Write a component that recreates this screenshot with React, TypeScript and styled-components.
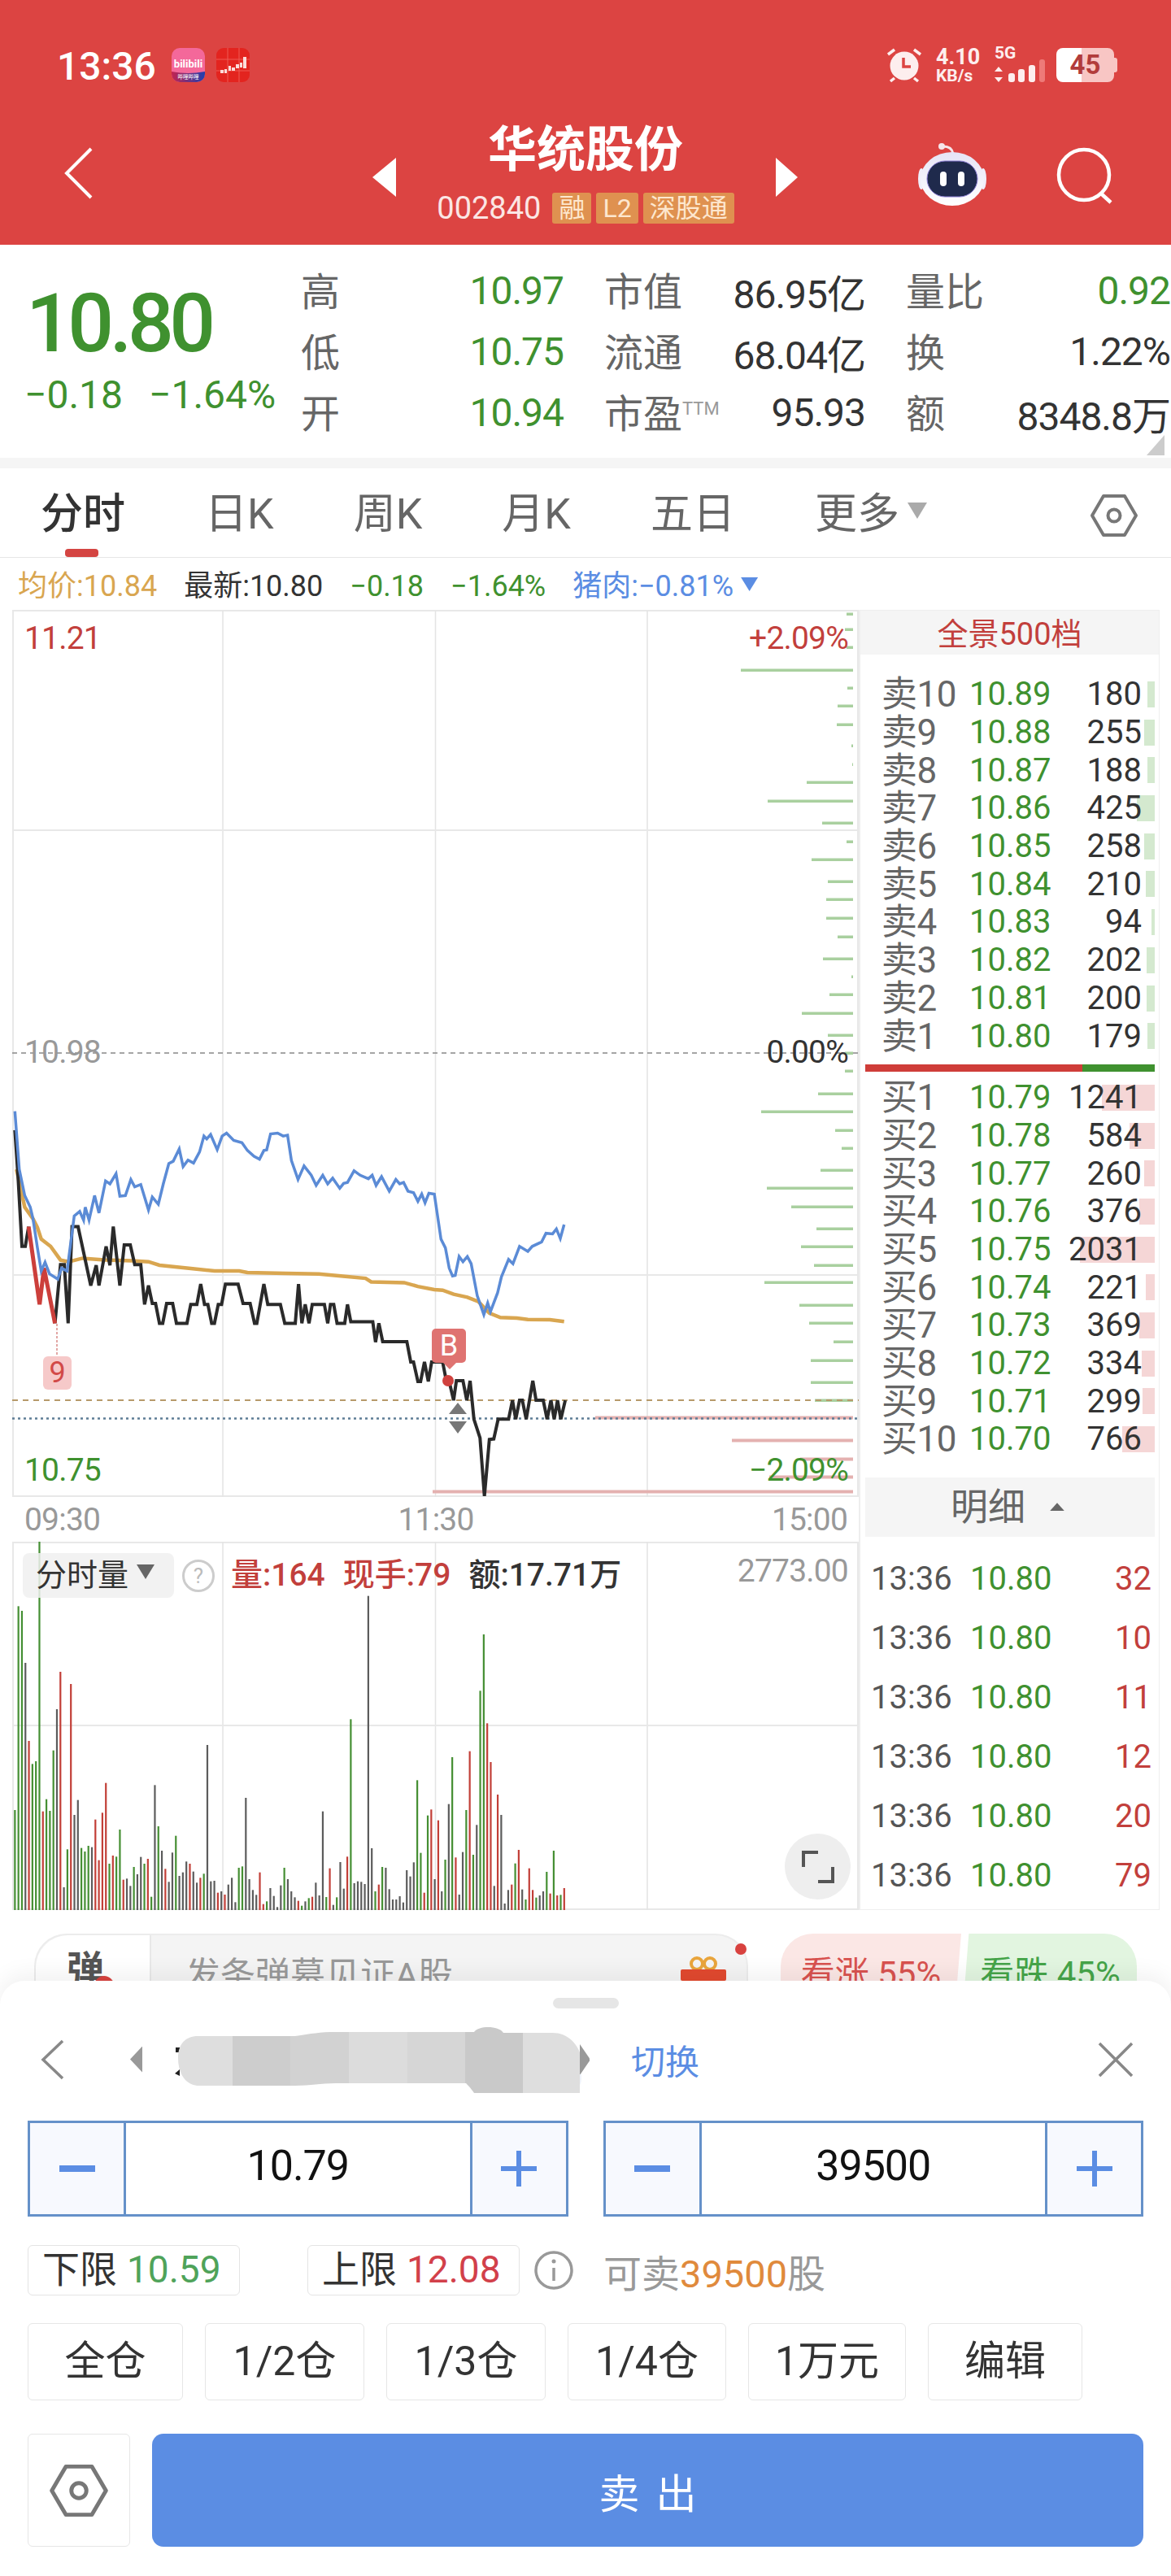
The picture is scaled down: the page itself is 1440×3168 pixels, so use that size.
import React from 'react';
import styled, { createGlobalStyle } from 'styled-components';

const RED = '#c23f3c';
const GREEN = '#3f912f';
const BLUE = '#5b8de3';
const GOLD = '#d9a650';
const INK = '#333';
const GRAY = '#666';
const GRID = '#e8e8e8';

const GlobalStyle = createGlobalStyle`
    html, body { margin: 0; padding: 0; background: #fff; }
    body { font-family: Roboto, "Noto Sans CJK SC", sans-serif; }
    * { box-sizing: border-box; }
`;

const Page = styled.div`
    position: relative;
    width: 1440px;
    height: 3168px;
    overflow: hidden;
    background: #fff;
    color: ${INK};
`;

/* Header */
const Header = styled.header`
    height: 301px;
    background: #dc4442;
    color: #fff;
`;

const StatusBar = styled.div`
    height: 150px;
    padding: 58px 70px 0 70px;
    display: flex;
    align-items: flex-start;
`;

const Clock = styled.span`
    font-size: 48px;
    font-weight: 500;
    line-height: 48px;
    width: 141px;
`;

const StatusRight = styled.div`
    margin-left: auto;
    display: flex;
    align-items: center;
    height: 44px;
    color: #fdeeee;
`;

const NetSpeed = styled.div`
    width: 72px;
    margin-left: 17px;
`;

const SpeedValue = styled.div`
    font-size: 27px;
    font-weight: 700;
    line-height: 26px;
`;

const SpeedUnit = styled.div`
    font-size: 21px;
    font-weight: 700;
    line-height: 20px;
`;

const NetType = styled.span`
    font-size: 21px;
    font-weight: 700;
    line-height: 20px;
    display: block;
    margin-bottom: -3px;
`;

const Battery = styled.div`
    position: relative;
    width: 71px;
    height: 42px;
    margin-left: 12px;
    border-radius: 8px;
    background: linear-gradient(90deg, #fff 44%, #f8c6c4 44%);
    color: #b23c3b;
    font-size: 33px;
    font-weight: 700;
    line-height: 42px;
    text-align: center;

    &::after {
        content: '';
        position: absolute;
        right: -4px;
        top: 12px;
        width: 4px;
        height: 18px;
        border-radius: 0 3px 3px 0;
        background: #f8c6c4;
    }
`;

const NavBar = styled.div`
    position: relative;
    height: 151px;
    display: flex;
    justify-content: center;
`;

const NavIcon = styled.svg<{ $left: number; $top: number }>`
    position: absolute;
    left: ${({ $left }) => $left}px;
    top: ${({ $top }) => $top}px;
`;

const TitleBlock = styled.div`
    text-align: center;
`;

const Title = styled.div`
    font-size: 60px;
    font-weight: 700;
    line-height: 70px;
`;

const SubRow = styled.div`
    margin-top: 17px;
    display: flex;
    align-items: center;
    justify-content: center;
    gap: 6px;
    font-size: 38px;
    line-height: 38px;
    color: #fbe6e4;
`;

const Code = styled.span`
    margin-right: 8px;
`;

const Tag = styled.span`
    background: #df9150;
    color: #fde7cf;
    border-radius: 3px;
    font-size: 32px;
    line-height: 38px;
    padding: 0 8px;
`;

/* Quote summary */
const Quote = styled.section`
    position: relative;
    height: 275px;
    padding: 19px 0 0 30px;
    display: flex;
    border-bottom: 13px solid #f5f5f5;
`;

const PriceBlock = styled.div`
    width: 340px;
    color: ${GREEN};
`;

const BigPrice = styled.div`
    margin: 22px 0 0 2px;
    font-size: 100px;
    font-weight: 500;
    line-height: 112px;
    letter-spacing: -5.5px;
`;

const PriceDelta = styled.div`
    display: flex;
    gap: 32px;
    margin-top: 6px;
    font-size: 48px;
    line-height: 52px;
    white-space: nowrap;
`;

const StatGrid = styled.div`
    display: grid;
    grid-template-columns: 323px 321px 325px;
    grid-auto-rows: 75px;
    column-gap: 50px;
`;

const Stat = styled.div`
    display: flex;
    justify-content: space-between;
    align-items: center;
    white-space: nowrap;
`;

const StatLabel = styled.span`
    margin-top: -5px;
    font-size: 48px;
    color: ${GRAY};
`;

const Ttm = styled.sup`
    font-size: 22px;
    color: #999;
    vertical-align: 16px;
    line-height: 0;
`;

const StatValue = styled.span<{ $green?: boolean }>`
    font-size: 48px;
    letter-spacing: -1px;
    color: ${({ $green }) => ($green ? GREEN : INK)};
`;

const CornerMark = styled.div`
    position: absolute;
    right: 8px;
    bottom: 3px;
    width: 22px;
    height: 25px;
    background: #ccc;
    clip-path: polygon(100% 0, 100% 100%, 0 100%);
`;

/* Tabs */
const Tabs = styled.nav`
    position: relative;
    height: 110px;
    padding: 27px 0 0 50px;
    display: flex;
    gap: 98px;
    border-bottom: 1px solid #e6e6e6;
`;

const Tab = styled.span<{ $active?: boolean }>`
    position: relative;
    font-size: 52px;
    line-height: 60px;
    color: ${({ $active }) => ($active ? INK : GRAY)};
    font-weight: ${({ $active }) => ($active ? 500 : 400)};
    white-space: nowrap;
`;

const TabMark = styled.span`
    position: absolute;
    left: 30px;
    top: 72px;
    width: 41px;
    height: 10px;
    border-radius: 4px;
    background: #d44542;
`;

const TabCaret = styled.span`
    display: inline-block;
    margin-left: 10px;
    width: 24px;
    height: 20px;
    vertical-align: 12px;
    background: #aaa;
    clip-path: polygon(0 0, 100% 0, 50% 100%);
`;

const TabSettings = styled.div`
    position: absolute;
    left: 1340px;
    top: 28px;
`;

/* Legend */
const Legend = styled.div`
    height: 64px;
    padding: 13px 0 0 22px;
    display: flex;
    align-items: flex-start;
    gap: 33px;
    font-size: 36px;
    line-height: 44px;
    white-space: nowrap;
`;

const LegendItem = styled.span<{ $color: string }>`
    color: ${({ $color }) => $color};
`;

const LegendCaret = styled.span`
    display: inline-block;
    margin-left: 9px;
    width: 21px;
    height: 17px;
    vertical-align: 6px;
    background: ${BLUE};
    clip-path: polygon(0 0, 100% 0, 50% 100%);
`;

/* Market area */
const Market = styled.div`
    display: flex;
    padding-left: 15px;
    height: 1599px;
`;

const ChartColumn = styled.div`
    width: 1041px;
`;

const PriceChart = styled.div`
    position: relative;
    width: 1041px;
    height: 1091px;
`;

const ChartSvg = styled.svg`
    display: block;
`;

const ChartLabel = styled.span<{ $color: string; $top: number; $left?: number; $right?: number }>`
    position: absolute;
    top: ${({ $top }) => $top}px;
    ${({ $left }) => ($left !== undefined ? `left: ${$left}px;` : '')}
    ${({ $right }) => ($right !== undefined ? `right: ${$right}px;` : '')}
    color: ${({ $color }) => $color};
    font-size: 39px;
    letter-spacing: -.8px;
    line-height: 44px;
`;

const TradeMark = styled.span`
    position: absolute;
    left: 516px;
    top: 884px;
    width: 42px;
    height: 42px;
    border-radius: 5px;
    background: #df7371;
    color: #fff;
    font-size: 36px;
    line-height: 42px;
    text-align: center;
`;

const CountMark = styled.span`
    position: absolute;
    left: 38px;
    top: 918px;
    width: 35px;
    height: 41px;
    border-radius: 6px;
    background: #f6c9c9;
    color: #d24a48;
    font-size: 36px;
    line-height: 41px;
    text-align: center;
`;

const TimeAxis = styled.div`
    height: 55px;
    padding: 6px 14px 0 15px;
    display: flex;
    justify-content: space-between;
    color: #999;
    font-size: 39px;
    letter-spacing: -.8px;
    line-height: 44px;
`;

const VolumeChart = styled.div`
    position: relative;
    height: 453px;
`;

const VolumeHead = styled.div`
    position: absolute;
    left: 13px;
    top: 14px;
    display: flex;
    align-items: center;
    font-size: 39px;
    line-height: 55px;
    white-space: nowrap;
`;

const VolumeChip = styled.span`
    width: 186px;
    height: 55px;
    padding-left: 16px;
    background: rgba(240, 240, 240, .85);
    border-radius: 8px;
    font-size: 38px;
`;

const VolumeCaret = styled.span`
    display: inline-block;
    margin-left: 10px;
    width: 22px;
    height: 18px;
    vertical-align: 8px;
    background: #666;
    clip-path: polygon(0 0, 100% 0, 50% 100%);
`;

const HelpMark = styled.span`
    width: 40px;
    height: 40px;
    margin: 0 20px 0 10px;
    border: 3px solid #ccc;
    border-radius: 50%;
    color: #bbb;
    font-size: 26px;
    line-height: 34px;
    text-align: center;
`;

const VolumeStat = styled.span<{ $color: string }>`
    margin-right: 22px;
    color: ${({ $color }) => $color};
    font-weight: 500;
`;

const ExpandButton = styled.div`
    position: absolute;
    left: 950px;
    top: 359px;
    width: 81px;
    height: 81px;
    border-radius: 50%;
    background: #eee;
    display: flex;
    align-items: center;
    justify-content: center;
`;

/* Order book */
const Book = styled.aside`
    width: 370px;
    height: 1599px;
    border: solid #eee;
    border-width: 1px 1px 1px 2px;
    overflow: hidden;
`;

const BookHead = styled.div`
    height: 54px;
    background: #f5f5f5;
    color: ${RED};
    font-size: 38px;
    line-height: 58px;
    text-align: center;
`;

const BookRows = styled.div<{ $top: number }>`
    padding-top: ${({ $top }) => $top}px;
`;

const BookRow = styled.div`
    position: relative;
    height: 46.7px;
    padding: 0 21px 0 26px;
    display: flex;
    align-items: center;
    font-size: 40px;
    line-height: 46px;
    white-space: nowrap;
`;

const BookLabel = styled.span`
    width: 108px;
    font-size: 44px;
    letter-spacing: -.5px;
    color: ${GRAY};
`;

const BookPrice = styled.span`
    color: ${GREEN};
`;

const BookQty = styled.span`
    position: relative;
    margin-left: auto;
    color: ${INK};
`;

const BookBar = styled.span<{ $color: string; $w: number }>`
    position: absolute;
    right: 5px;
    top: 7px;
    height: 32px;
    width: ${({ $w }) => $w}px;
    background: ${({ $color }) => $color};
`;

const SplitBar = styled.div`
    height: 9px;
    margin: 11px 5px 9px 6px;
    background: linear-gradient(90deg, #cf3d39 75%, ${GREEN} 75%);
`;

const DetailHead = styled.div`
    height: 73px;
    margin: 23px 5px 0 6px;
    background: #f5f5f5;
    color: ${GRAY};
    font-size: 46px;
    line-height: 73px;
    padding-left: 105px;
    display: flex;
    align-items: center;
`;

const DetailCaret = styled.span`
    margin-left: 30px;
    width: 18px;
    height: 10px;
    background: #666;
    clip-path: polygon(50% 0, 100% 100%, 0 100%);
`;

const DetailRows = styled.div`
    padding-top: 15px;
`;

const DetailRow = styled.div`
    height: 73px;
    padding: 0 9px 0 13px;
    display: flex;
    align-items: center;
    font-size: 40px;
`;

const DetailTime = styled.span`
    width: 122px;
    color: #555;
`;

const DetailQty = styled.span`
    margin-left: auto;
    color: ${RED};
`;

/* Comment row */
const CommentRow = styled.div`
    padding: 29px 42px 0;
    display: flex;
    gap: 40px;
`;

const CommentPill = styled.div`
    position: relative;
    width: 878px;
    height: 80px;
    display: flex;
    border: 2px solid #ececec;
    border-bottom: 0;
    border-radius: 40px 40px 0 0;
    background: #f4f4f4;
    color: #999;
    font-size: 43px;
    line-height: 98px;
`;

const DanmakuKey = styled.span`
    position: relative;
    width: 142px;
    padding-left: 38px;
    background: #fff;
    border-radius: 40px 0 0 0;
    border-right: 2px solid #e8e8e8;
    font-size: 46px;
    line-height: 84px;
    font-weight: 700;
    color: #555;

    &::after {
        content: '';
        position: absolute;
        left: 72px;
        top: 50px;
        width: 24px;
        height: 24px;
        border-radius: 50%;
        background: #d8423f;
    }
`;

const CommentText = styled.span`
    padding-left: 42px;
    white-space: nowrap;
`;

const Gift = styled.svg`
    position: absolute;
    right: 25px;
    top: 26px;
`;

const RedDot = styled.span`
    position: absolute;
    right: 0;
    top: 10px;
    width: 14px;
    height: 14px;
    border-radius: 50%;
    background: #d8423f;
`;

const Sentiment = styled.div<{ $up?: boolean }>`
    height: 80px;
    width: ${({ $up }) => ($up ? 222 : 213)}px;
    margin-left: ${({ $up }) => ($up ? 0 : -37)}px;
    border-radius: ${({ $up }) => ($up ? '40px 0 0 0' : '0 40px 0 0')};
    background: ${({ $up }) => ($up ? '#fbe7e5' : '#e2f5e0')};
    clip-path: ${({ $up }) =>
        $up ? 'polygon(0 0, 100% 0, 97% 100%, 0 100%)' : 'polygon(3% 0, 100% 0, 100% 100%, 0 100%)'};
    color: ${({ $up }) => ($up ? '#d8524f' : '#45a449')};
    font-size: 42px;
    line-height: 100px;
    text-align: center;
    white-space: nowrap;
`;

/* Trade sheet */
const Sheet = styled.section`
    position: absolute;
    left: 0;
    right: 0;
    top: 2436px;
    height: 732px;
    padding: 21px 34px 0 34px;
    background: #fff;
    border-radius: 30px 30px 0 0;
    box-shadow: 0 -8px 28px rgba(0, 0, 0, .06);
`;

const Handle = styled.div`
    width: 81px;
    height: 13px;
    margin: 0 auto;
    border-radius: 7px;
    background: #e6e6e6;
`;

const AccountRow = styled.div`
    position: relative;
    height: 65px;
    margin-top: 30px;
    display: flex;
    align-items: center;
`;

const AccountBack = styled.svg`
    margin-left: 14px;
`;

const AccountArrow = styled.span`
    margin: 0 0 0 78px;
    width: 15px;
    height: 32px;
    background: #999;
    clip-path: polygon(100% 0, 100% 100%, 0 50%);
`;

const Redaction = styled.svg`
    margin-left: 38px;
`;

const SwitchLink = styled.span`
    margin-left: 51px;
    color: ${BLUE};
    font-size: 42px;
`;

const CloseIcon = styled.svg`
    margin-left: auto;
    margin-right: 12px;
`;

const Steppers = styled.div`
    margin-top: 43px;
    display: flex;
    gap: 43px;
`;

const Stepper = styled.div`
    width: 665px;
    height: 118px;
    display: flex;
    border: 3px solid #6591c9;
`;

const StepButton = styled.span`
    width: 115px;
    background: #f7f9fe;
    display: flex;
    align-items: center;
    justify-content: center;
`;

const StepValue = styled.span`
    flex: 1;
    border: solid #6591c9;
    border-width: 0 3px;
    color: #111;
    font-size: 52px;
    letter-spacing: -1px;
    line-height: 106px;
    text-align: center;
`;

const LimitRow = styled.div`
    margin-top: 35px;
    display: flex;
    align-items: center;
    height: 62px;
    font-size: 47px;
`;

const LimitChip = styled.span`
    width: 261px;
    height: 62px;
    margin-right: 83px;
    padding-left: 17px;
    border: 1px solid #e4e4e4;
    border-radius: 6px;
    font-size: 46px;
    line-height: 58px;
    white-space: nowrap;
`;

const LimitValue = styled.span<{ $color: string }>`
    margin-left: 12px;
    font-size: 46px;
    color: ${({ $color }) => $color};
`;

const InfoIcon = styled.svg`
    margin: 0 36px 0 -66px;
`;

const SellableText = styled.span`
    color: #999;
`;

const SellableCount = styled.span`
    color: #e08a3c;
`;

const QuickRow = styled.div`
    margin-top: 34px;
    display: flex;
    gap: 27px;
`;

const QuickButton = styled.span<{ $w: number }>`
    width: ${({ $w }) => $w}px;
    height: 95px;
    border: 1px solid #e6e6e6;
    border-radius: 6px;
    font-size: 50px;
    line-height: 93px;
    text-align: center;
    white-space: nowrap;
`;

const ActionRow = styled.div`
    margin-top: 41px;
    display: flex;
    gap: 27px;
`;

const SettingsButton = styled.span`
    width: 126px;
    height: 139px;
    border: 1px solid #e6e6e6;
    border-radius: 6px;
    display: flex;
    align-items: center;
    justify-content: center;
`;

const SellButton = styled.button`
    flex: 1;
    height: 139px;
    padding: 0 0 0 20px;
    border: 0;
    border-radius: 14px;
    background: ${BLUE};
    color: #fff;
    font-family: inherit;
    font-size: 50px;
    letter-spacing: 20px;
`;

/* Chart data: points as read off the reference, zoomed coordinates */
const toPage = (pts: number[]) => {
    const out: string[] = [];
    for (let i = 0; i < pts.length; i += 2) {
        out.push(`${(pts[i] / 1.479).toFixed(1)},${(pts[i + 1] / 2.8 + 1330).toFixed(1)}`);
    }
    return out.join(' ');
};

const bluePts = [27,100,35,300,45,390,55,430,60,470,68,570,75,650,82,620,90,660,105,678,112,640,122,650,135,460,145,445,152,475,155,430,162,475,172,390,180,450,192,340,200,350,211,315,218,392,228,390,238,335,245,360,256,352,270,440,277,395,288,420,297,350,307,280,315,272,326,230,333,290,342,268,352,278,363,240,371,185,376,195,383,180,395,232,404,185,412,175,425,200,440,208,450,235,462,255,472,265,480,235,485,233,492,178,505,175,515,185,523,182,530,270,542,335,553,288,566,320,575,355,587,320,596,350,605,330,618,365,625,348,632,345,644,305,655,320,670,332,677,320,684,355,694,325,708,375,720,335,727,350,734,345,742,375,752,380,760,410,767,385,773,415,780,382,790,385,802,540,810,570,817,640,823,667,828,665,835,600,842,618,850,600,857,625,868,735,880,800,887,760,892,790,905,725,912,670,925,610,933,625,945,565,960,582,968,565,985,550,993,520,1005,522,1012,505,1019,538,1026,490];
const goldPts = [30,300,45,430,60,470,68,500,75,540,92,565,110,612,125,618,150,606,190,612,240,615,270,618,290,630,340,640,390,650,435,650,450,655,520,658,580,660,620,667,665,675,675,687,735,690,760,703,790,714,805,716,825,730,850,740,870,755,890,795,910,810,940,812,960,817,1000,818,1026,824];
const blackPts = [27,165,33,330,40,565,46,565,52,497];
const redPts = [52,497,72,765,80,640,100,830];
const blackPts2 = [100,830,110,628,117,628,124,830,131,497,142,497,165,700,175,630,180,700,193,565,200,630,206,497,218,700,226,560,237,560,245,628,256,628,263,765,270,700,277,762,283,762,290,830,296,830,303,762,314,762,321,830,340,830,347,765,358,765,365,695,372,765,378,765,385,830,390,830,397,765,403,765,410,695,433,695,442,762,455,762,463,830,467,830,480,695,487,765,510,765,518,830,537,830,543,695,549,830,555,765,562,830,568,765,590,765,596,830,601,765,607,765,613,830,627,830,632,765,638,825,678,825,683,895,689,830,696,893,740,893,747,963,752,963,760,1030,765,1030,772,963,779,1030,785,963,805,963,812,1030,817,1030,825,1095,830,1028,842,1028,849,1095,855,1028,862,1160,873,1225,881,1425,890,1230,898,1228,906,1160,925,1160,932,1095,938,1160,945,1095,950,1095,957,1160,969,1028,975,1095,988,1095,995,1160,1002,1095,1008,1160,1014,1095,1020,1160,1028,1095];

// [page y, length] of the tick bars down the right edge of the chart
const greenTicks = [[754,8],[773,10],[795,8],[823,138],[845,7],[867,19],[890,20],[916,2],[939,1],[961,57],[984,105],[1011,38],[1034,8],[1056,51],[1083,31],[1105,33],[1128,33],[1151,19],[1178,37],[1200,2],[1222,29],[1245,63],[1272,31],[1294,10],[1316,10],[1344,43],[1366,113],[1389,22],[1411,14],[1438,40],[1460,106],[1483,76],[1510,45],[1532,64],[1555,48],[1576,109],[1604,66],[1626,54],[1649,24],[1672,52],[1699,52],[1721,47]];
const redTicks = [[1742,317],[1770,149],[1793,65],[1815,103],[1833,517]];

// zoomed top of each volume bar, one letter for the colour
const volumeBars = 'g1035 g283 g300 k492 r780 g865 g855 g45 r1040 g995 g1038 g815 k663 r525 k1320 g1180 r570 k1053 k998 g1175 g1188 g1167 k1172 r1070 r1220 r1045 r935 g1233 r1203 g1207 g1107 r1292 k1288 k1315 g1245 k1272 k1208 g1233 r1215 g1355 k943 g1095 k1185 r1252 k1300 k1192 g1130 k1278 k1265 k1225 r1233 k1262 k1303 r1285 g1270 k795 k1298 k1296 r1340 k1335 r1347 k1310 k1285 k1375 g1248 g1243 k990 k1290 k1330 k1348 r1265 r1382 g1372 k1323 k1352 k1393 k1313 g1248 k1290 k1335 k1357 r1370 g1388 k1372 g1360 r1355 k1303 k1350 k1040 g1356 r1250 k1385 g1357 k1227 k1325 r1207 g700 k1305 k1298 k1300 k1308 k245 k1176 g1335 r1310 g1245 k1248 k1327 k1365 k1365 k1353 k1376 k1257 k1280 k1228 g925 g1193 r1340 g1055 r1033 k1290 r1073 k1335 g1218 k1013 g840 r1210 k1347 k1190 g1035 r818 g1200 k1090 g595 g387 r715 r858 k1315 r978 k1053 k1380 k1330 r1310 g1232 r1182 k1328 g1365 r1250 r1330 g1358 k1350 k1335 g1263 r1343 g1185 r1350 g1348 r1323'
    .split(' ')
    .map((b) => ({ color: b[0], top: Number(b.slice(1)) }));
const barColor: Record<string, string> = { g: '#458f33', r: '#c23f38', k: '#5c5c5c' };
const barStep = (1026 - 27) / (volumeBars.length - 1);

const askRows = [
    ['卖10', '10.89', '180', 9], ['卖9', '10.88', '255', 13], ['卖8', '10.87', '188', 9], ['卖7', '10.86', '425', 22], ['卖6', '10.85', '258', 13],
    ['卖5', '10.84', '210', 11], ['卖4', '10.83', '94', 4], ['卖3', '10.82', '202', 10], ['卖2', '10.81', '200', 10], ['卖1', '10.80', '179', 9],
] as const;
const bidRows = [
    ['买1', '10.79', '1241', 65], ['买2', '10.78', '584', 31], ['买3', '10.77', '260', 13], ['买4', '10.76', '376', 19], ['买5', '10.75', '2031', 92],
    ['买6', '10.74', '221', 11], ['买7', '10.73', '369', 19], ['买8', '10.72', '334', 16], ['买9', '10.71', '299', 15], ['买10', '10.70', '766', 40],
] as const;
const detailQty = ['32', '10', '11', '12', '20', '79'];

const HexIcon = ({ size = 60 }: { size?: number }) => (
    <svg width={size} height={size} viewBox="0 0 60 60" fill="none" stroke="#777" strokeWidth="4">
        <path d="M17 6h26l14 24-14 24H17L3 30z" strokeLinejoin="round" />
        <circle cx="30" cy="30" r="7.5" />
    </svg>
);

const Minus = () => (
    <svg width="44" height="8"><rect width="44" height="8" fill={BLUE} /></svg>
);
const Plus = () => (
    <svg width="44" height="44"><path d="M0 19h44v6H0zM19 0h6v44h-6z" fill={BLUE} /></svg>
);

const BiliIcon = () => (
    <svg width="41" height="42" viewBox="0 0 41 42" style={{ marginTop: 1 }}>
        <defs>
            <linearGradient id="biliBand" x1="0" x2="1">
                <stop offset="0" stopColor="#c4244f" />
                <stop offset="1" stopColor="#1f3fb0" />
            </linearGradient>
        </defs>
        <rect width="41" height="42" rx="10" fill="#f4689a" />
        <text x="20.5" y="24" textAnchor="middle" fontSize="13" fontWeight="700" fill="#fff">bilibili</text>
        <path d="M0 29q20 4 41 0v3a10 10 0 0 1-10 10H10A10 10 0 0 1 0 32z" fill="url(#biliBand)" />
        <text x="20.5" y="38" textAnchor="middle" fontSize="6.5" fill="#fff">哔哩哔哩</text>
    </svg>
);

const TrendIcon = () => (
    <svg width="41" height="42" viewBox="0 0 41 42" style={{ marginLeft: 14, marginTop: 1 }}>
        <rect width="41" height="42" rx="9" fill="#e3241f" />
        <path d="M0 14h41M0 28h41M14 0v42M28 0v42" stroke="#ee5a55" strokeWidth="1" />
        <path d="M5 27h4v4H5zM10 26h3v5h-3zM15 22h3v6h-3zM19 24h4v4h-4zM24 20h4v5h-4zM29 18h3v6h-3zM33 11h4v14h-4z" fill="#fbdcd9" />
    </svg>
);

const AlarmIcon = () => (
    <svg width="44" height="44" viewBox="0 0 44 44">
        <circle cx="22" cy="23" r="17.5" fill="#fdeeee" />
        <path d="M21 13v11h9" stroke="#dc4442" strokeWidth="3.5" fill="none" />
        <path d="M2 9l8-6M42 9l-8-6M5 42l5-4M39 42l-5-4" stroke="#fdeeee" strokeWidth="3.5" />
    </svg>
);

const SignalIcon = () => (
    <svg width="64" height="30" viewBox="0 0 64 30">
        <path d="M5 10l5 6H0zM5 29l5-6H0z" fill="#fdeeee" />
        <rect x="17" y="18" width="8" height="11" rx="3" fill="#fdeeee" />
        <rect x="29" y="13" width="8" height="16" rx="3" fill="#fdeeee" />
        <rect x="42" y="8" width="8" height="21" rx="3" fill="#fdeeee" />
        <rect x="55" y="1" width="7" height="28" rx="3" fill="#ee7a78" />
    </svg>
);

const RobotIcon = () => (
    <NavIcon $left={1128} $top={24} width="86" height="80" viewBox="0 0 86 80">
        <defs>
            <linearGradient id="robotShell" x1="0" x2="0" y1="0" y2="1">
                <stop offset="0" stopColor="#e6e4f6" />
                <stop offset="1" stopColor="#ffffff" />
            </linearGradient>
        </defs>
        <circle cx="30" cy="6" r="4" fill="#f6e6ea" />
        <path d="M32 6c7 0 11 3 12 9" stroke="#f6e6ea" strokeWidth="3" fill="none" />
        <ellipse cx="5" cy="46" rx="4" ry="13" fill="#f0eefa" />
        <ellipse cx="81" cy="46" rx="4" ry="13" fill="#f0eefa" />
        <ellipse cx="43" cy="46" rx="39" ry="33" fill="url(#robotShell)" />
        <rect x="12" y="24" width="62" height="44" rx="22" fill="#1f2a4c" stroke="#8d7fd6" strokeWidth="1" />
        <rect x="28" y="37" width="8" height="18" rx="4" fill="#fff" />
        <rect x="50" y="37" width="8" height="18" rx="4" fill="#fff" />
    </NavIcon>
);

const PriceChartDrawing = () => (
    <ChartSvg width="1041" height="1091" viewBox="15 749 1041 1091">
        <rect x="16" y="750" width="1039" height="1089" fill="none" stroke={GRID} strokeWidth="2" />
        <path d="M274 750v1090M535.5 750v1090M796 750v1090" stroke="#e4e4e4" strokeWidth="1.5" />
        <path d="M15 1020h1041M15 1567h1041" stroke={GRID} strokeWidth="2" />
        <path d="M15 1294h1041" stroke="#888" strokeWidth="1.5" strokeDasharray="6 5" />
        {greenTicks.map(([y, len]) => (
            <rect key={y} x={1049 - len} y={y - 1.5} width={len} height="3.5" fill="#a9d09f" />
        ))}
        {redTicks.map(([y, len]) => (
            <rect key={y} x={1049 - len} y={y - 1.5} width={len} height="4" fill="#e4b1b0" />
        ))}
        <path d="M15 1721h1041" stroke="#b79a6a" strokeWidth="2" strokeDasharray="7 6" />
        <path d="M15 1743.5h1041" stroke="#5f7d96" strokeWidth="2.5" strokeDasharray="3 4" />
        <polyline points={toPage(goldPts)} fill="none" stroke={GOLD} strokeWidth="4.5" />
        <polyline points={toPage(blackPts)} fill="none" stroke="#2a2a2a" strokeWidth="4" />
        <polyline points={toPage(blackPts2)} fill="none" stroke="#2a2a2a" strokeWidth="4" />
        <polyline points={toPage(redPts)} fill="none" stroke="#cc3f3b" strokeWidth="5" />
        <polyline points={toPage(bluePts)} fill="none" stroke="#5b8bd6" strokeWidth="3.5" />
        <path d="M70 1627v38" stroke="#d98a88" strokeWidth="1.5" strokeDasharray="3 2" />
        <path d="M545 1675l8 8 8-8z" fill="#df7371" />
        <circle cx="551" cy="1697" r="7" fill="#d0413e" />
        <path d="M563 1724l-11 14h22zM552 1747h22l-11 15z" fill="#777" />
    </ChartSvg>
);

const VolumeDrawing = () => (
    <ChartSvg width="1041" height="453" viewBox="15 1895 1041 453">
        <rect x="16" y="1896" width="1039" height="451" fill="none" stroke={GRID} strokeWidth="2" />
        <path d="M274 1895v453M535.5 1895v453M796 1895v453" stroke="#e4e4e4" strokeWidth="1.5" />
        <path d="M15 2121h1041" stroke={GRID} strokeWidth="2" />
        {volumeBars.map((b, i) => (
            <rect
                key={i}
                x={(27 + i * barStep) / 1.479 - 1}
                y={b.top / 3 + 1880}
                width="2.2"
                height={2348 - (b.top / 3 + 1880)}
                fill={barColor[b.color]}
            />
        ))}
    </ChartSvg>
);

// the blurred patch that hides the account name in the picture
const RedactedName = () => (
    <Redaction width="512" height="82" viewBox="212 2494 512 82">
        <defs>
            <clipPath id="nameBlob">
                <path d="M218 2533c0-18 10-27 24-27l120 0c20-3 30-5 50-5h170c6-8 30-8 36 1h60c20 0 30 14 34 24v50c-2 0-40 0-40 0h-90c-4-6-8-10-10-12h-160c-20 0-30 3-50 3H244c-16 0-26-14-26-34z" />
            </clipPath>
        </defs>
        <path d="M215 2520h5v6h-5zM214 2552l6-5v8z" fill="#222" />
        <path d="M712 2516l13 19-13 19" fill="#999" />
        <path d="M598 2553h116v6c0 10-10 16-20 16h-76c-10 0-20-10-20-22z" fill="#f0f4fb" />
        <g clipPath="url(#nameBlob)">
            <rect x="212" y="2494" width="73" height="82" fill="#dedede" />
            <rect x="285" y="2494" width="71" height="82" fill="#cdcdcd" />
            <rect x="356" y="2494" width="72" height="82" fill="#d2d2d2" />
            <rect x="428" y="2494" width="72" height="82" fill="#dcdcdc" />
            <rect x="500" y="2494" width="71" height="82" fill="#d6d6d6" />
            <rect x="571" y="2494" width="71" height="82" fill="#c9c9c9" />
            <rect x="642" y="2494" width="82" height="82" fill="#dedede" />
        </g>
    </Redaction>
);

const App = () => (
    <Page>
        <GlobalStyle />
        <Header>
            <StatusBar>
                <Clock>13:36</Clock>
                <BiliIcon />
                <TrendIcon />
                <StatusRight>
                    <AlarmIcon />
                    <NetSpeed>
                        <SpeedValue>4.10</SpeedValue>
                        <SpeedUnit>KB/s</SpeedUnit>
                    </NetSpeed>
                    <div>
                        <NetType>5G</NetType>
                        <SignalIcon />
                    </div>
                    <Battery>45</Battery>
                </StatusRight>
            </StatusBar>
            <NavBar>
                <NavIcon $left={76} $top={30} width="42" height="66" viewBox="0 0 42 66">
                    <path d="M36 3L6 33l30 30" fill="none" stroke="#fff" strokeWidth="4" />
                </NavIcon>
                <NavIcon $left={458} $top={44} width="30" height="48" viewBox="0 0 30 48">
                    <path d="M29 0v48L0 24z" fill="#fff" />
                </NavIcon>
                <TitleBlock>
                    <Title>华统股份</Title>
                    <SubRow>
                        <Code>002840</Code>
                        <Tag>融</Tag>
                        <Tag>L2</Tag>
                        <Tag>深股通</Tag>
                    </SubRow>
                </TitleBlock>
                <NavIcon $left={954} $top={44} width="28" height="48" viewBox="0 0 28 48">
                    <path d="M0 0v48l27-24z" fill="#fff" />
                </NavIcon>
                <RobotIcon />
                <NavIcon $left={1298} $top={30} width="76" height="74" viewBox="0 0 76 74">
                    <circle cx="35" cy="35" r="31" fill="none" stroke="#fff" strokeWidth="4.5" />
                    <path d="M56 58l12 11" stroke="#fff" strokeWidth="4.5" />
                </NavIcon>
            </NavBar>
        </Header>

        <Quote>
            <PriceBlock>
                <BigPrice>10.80</BigPrice>
                <PriceDelta>
                    <span>−0.18</span>
                    <span>−1.64%</span>
                </PriceDelta>
            </PriceBlock>
            <StatGrid>
                <Stat><StatLabel>高</StatLabel><StatValue $green>10.97</StatValue></Stat>
                <Stat><StatLabel>市值</StatLabel><StatValue>86.95亿</StatValue></Stat>
                <Stat><StatLabel>量比</StatLabel><StatValue $green>0.92</StatValue></Stat>
                <Stat><StatLabel>低</StatLabel><StatValue $green>10.75</StatValue></Stat>
                <Stat><StatLabel>流通</StatLabel><StatValue>68.04亿</StatValue></Stat>
                <Stat><StatLabel>换</StatLabel><StatValue>1.22%</StatValue></Stat>
                <Stat><StatLabel>开</StatLabel><StatValue $green>10.94</StatValue></Stat>
                <Stat><StatLabel>市盈<Ttm>TTM</Ttm></StatLabel><StatValue>95.93</StatValue></Stat>
                <Stat><StatLabel>额</StatLabel><StatValue>8348.8万</StatValue></Stat>
            </StatGrid>
            <CornerMark />
        </Quote>

        <Tabs>
            <Tab $active>分时<TabMark /></Tab>
            <Tab>日K</Tab>
            <Tab>周K</Tab>
            <Tab>月K</Tab>
            <Tab>五日</Tab>
            <Tab>更多<TabCaret /></Tab>
            <TabSettings><HexIcon /></TabSettings>
        </Tabs>

        <Legend>
            <LegendItem $color={GOLD}>均价:10.84</LegendItem>
            <LegendItem $color={INK}>最新:10.80</LegendItem>
            <LegendItem $color={GREEN}>−0.18</LegendItem>
            <LegendItem $color={GREEN}>−1.64%</LegendItem>
            <LegendItem $color={BLUE}>猪肉:−0.81%<LegendCaret /></LegendItem>
        </Legend>

        <Market>
            <ChartColumn>
                <PriceChart>
                    <PriceChartDrawing />
                    <ChartLabel $color={RED} $top={13} $left={15}>11.21</ChartLabel>
                    <ChartLabel $color={RED} $top={13} $right={13}>+2.09%</ChartLabel>
                    <ChartLabel $color="#999" $top={522} $left={15}>10.98</ChartLabel>
                    <ChartLabel $color={INK} $top={522} $right={13}>0.00%</ChartLabel>
                    <ChartLabel $color={GREEN} $top={1036} $left={15}>10.75</ChartLabel>
                    <ChartLabel $color={GREEN} $top={1036} $right={13}>−2.09%</ChartLabel>
                    <TradeMark>B</TradeMark>
                    <CountMark>9</CountMark>
                </PriceChart>
                <TimeAxis>
                    <span>09:30</span>
                    <span>11:30</span>
                    <span>15:00</span>
                </TimeAxis>
                <VolumeChart>
                    <VolumeDrawing />
                    <VolumeHead>
                        <VolumeChip>分时量<VolumeCaret /></VolumeChip>
                        <HelpMark>?</HelpMark>
                        <VolumeStat $color={RED}>量:164</VolumeStat>
                        <VolumeStat $color={RED}>现手:79</VolumeStat>
                        <VolumeStat $color={INK}>额:17.71万</VolumeStat>
                    </VolumeHead>
                    <ChartLabel $color="#999" $top={14} $right={13}>2773.00</ChartLabel>
                    <ExpandButton>
                        <svg width="44" height="44" viewBox="0 0 44 44" fill="none" stroke="#555" strokeWidth="4">
                            <path d="M4 22V4h18M40 22v18H22" />
                        </svg>
                    </ExpandButton>
                </VolumeChart>
            </ChartColumn>

            <Book>
                <BookHead>全景500档</BookHead>
                <BookRows $top={26}>
                    {askRows.map(([label, price, qty, w]) => (
                        <BookRow key={label}>
                            <BookBar $color="#d4e9cf" $w={w} />
                            <BookLabel>{label}</BookLabel>
                            <BookPrice>{price}</BookPrice>
                            <BookQty>{qty}</BookQty>
                        </BookRow>
                    ))}
                </BookRows>
                <SplitBar />
                {bidRows.map(([label, price, qty, w]) => (
                    <BookRow key={label}>
                        <BookBar $color="#f5d6d6" $w={w} />
                        <BookLabel>{label}</BookLabel>
                        <BookPrice>{price}</BookPrice>
                        <BookQty>{qty}</BookQty>
                    </BookRow>
                ))}
                <DetailHead>明细<DetailCaret /></DetailHead>
                <DetailRows>
                    {detailQty.map((qty, i) => (
                        <DetailRow key={i}>
                            <DetailTime>13:36</DetailTime>
                            <BookPrice>10.80</BookPrice>
                            <DetailQty>{qty}</DetailQty>
                        </DetailRow>
                    ))}
                </DetailRows>
            </Book>
        </Market>

        <CommentRow>
            <CommentPill>
                <DanmakuKey>弹</DanmakuKey>
                <CommentText>发条弹幕见证A股</CommentText>
                <Gift width="56" height="52" viewBox="0 0 56 52">
                    <circle cx="20" cy="9" r="7" fill="none" stroke="#e9a53c" strokeWidth="4" />
                    <circle cx="36" cy="9" r="7" fill="none" stroke="#e9a53c" strokeWidth="4" />
                    <rect x="0" y="16" width="56" height="14" rx="2" fill="#e2492f" />
                    <rect x="5" y="30" width="46" height="22" fill="#cf3a26" />
                </Gift>
                <RedDot />
            </CommentPill>
            <Sentiment $up>看涨 55%</Sentiment>
            <Sentiment>看跌 45%</Sentiment>
        </CommentRow>

        <Sheet>
            <Handle />
            <AccountRow>
                <AccountBack width="34" height="50" viewBox="0 0 34 50">
                    <path d="M29 2L5 25l24 23" fill="none" stroke="#888" strokeWidth="3.5" />
                </AccountBack>
                <AccountArrow />
                <RedactedName />
                <SwitchLink>切换</SwitchLink>
                <CloseIcon width="44" height="44" viewBox="0 0 44 44">
                    <path d="M2 2l40 40M42 2L2 42" stroke="#888" strokeWidth="3.5" />
                </CloseIcon>
            </AccountRow>
            <Steppers>
                <Stepper>
                    <StepButton><Minus /></StepButton>
                    <StepValue>10.79</StepValue>
                    <StepButton><Plus /></StepButton>
                </Stepper>
                <Stepper>
                    <StepButton><Minus /></StepButton>
                    <StepValue>39500</StepValue>
                    <StepButton><Plus /></StepButton>
                </Stepper>
            </Steppers>
            <LimitRow>
                <LimitChip>下限<LimitValue $color="#4fa35a">10.59</LimitValue></LimitChip>
                <LimitChip>上限<LimitValue $color="#d2404a">12.08</LimitValue></LimitChip>
                <InfoIcon width="50" height="50" viewBox="0 0 50 50">
                    <circle cx="25" cy="25" r="22" fill="none" stroke="#999" strokeWidth="3.5" />
                    <path d="M25 22v16" stroke="#999" strokeWidth="3.5" />
                    <circle cx="25" cy="14" r="2.5" fill="#999" />
                </InfoIcon>
                <SellableText>可卖<SellableCount>39500</SellableCount>股</SellableText>
            </LimitRow>
            <QuickRow>
                <QuickButton $w={191}>全仓</QuickButton>
                <QuickButton $w={196}>1/2仓</QuickButton>
                <QuickButton $w={196}>1/3仓</QuickButton>
                <QuickButton $w={195}>1/4仓</QuickButton>
                <QuickButton $w={194}>1万元</QuickButton>
                <QuickButton $w={190}>编辑</QuickButton>
            </QuickRow>
            <ActionRow>
                <SettingsButton><HexIcon size={74} /></SettingsButton>
                <SellButton>卖出</SellButton>
            </ActionRow>
        </Sheet>
    </Page>
);

export default App;
